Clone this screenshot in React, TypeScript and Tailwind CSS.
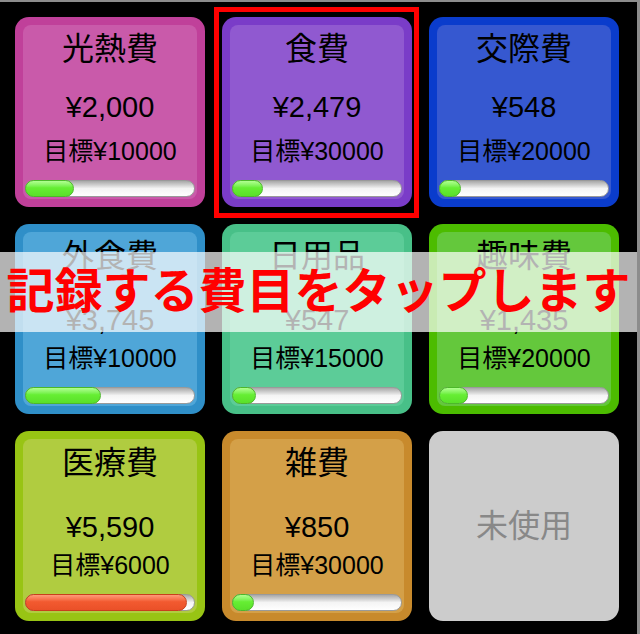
type Card = {
  name: string
  amount: number
  goal: number
  outer: string
  inner: string
  row: number
}

const CARDS: Card[] = [
  { name: '光熱費', amount: 2000, goal: 10000, outer: 'bg-[#c0409a]', inner: 'bg-[#c95aaa]', row: 1 },
  { name: '食費', amount: 2479, goal: 30000, outer: 'bg-[#7a3cc8]', inner: 'bg-[#9059d0]', row: 1 },
  { name: '交際費', amount: 548, goal: 20000, outer: 'bg-[#0a3ccc]', inner: 'bg-[#3658d0]', row: 1 },
  { name: '外食費', amount: 3745, goal: 10000, outer: 'bg-[#2f8fc8]', inner: 'bg-[#4fa6d8]', row: 2 },
  { name: '日用品', amount: 547, goal: 15000, outer: 'bg-[#48c088]', inner: 'bg-[#5ccc98]', row: 2 },
  { name: '趣味費', amount: 1435, goal: 20000, outer: 'bg-[#4cbc00]', inner: 'bg-[#64c83c]', row: 2 },
  { name: '医療費', amount: 5590, goal: 6000, outer: 'bg-[#98c414]', inner: 'bg-[#b0cc40]', row: 3 },
  { name: '雑費', amount: 850, goal: 30000, outer: 'bg-[#c88a2c]', inner: 'bg-[#d4a048]', row: 3 },
]

function ProgressBar({ ratio }: { ratio: number }) {
  const width = Math.min(170, 18 + 155 * ratio)
  const over = ratio > 0.8
  return (
    <div className="relative mx-[2px] mb-[2px] mt-[16px] h-[17px] w-[170px] rounded-full border border-[#9a9a9a] bg-linear-to-b from-[#a8a8a8] via-[#f4f4f4] via-50% to-white">
      <div
        className={
          over
            ? 'absolute -left-px -top-px h-[17px] rounded-full border border-[#c8401c] bg-linear-to-b from-[#ff9a78] via-[#f25a30] via-45% to-[#ea5028]'
            : 'absolute -left-px -top-px h-[17px] rounded-full border border-[#4cb82a] bg-linear-to-b from-[#b0ff90] via-[#66ee33] via-45% to-[#5ae02a]'
        }
        style={{ width }}
      />
    </div>
  )
}

function BudgetCard({ card }: { card: Card }) {
  return (
    <div className={`h-[190px] w-[190px] rounded-[14px] p-[8px] ${card.outer}`}>
      <div className={`flex h-full flex-col items-center rounded-[8px] ${card.inner}`}>
        <div className="mt-[8px] flex h-[32px] items-center text-[32px] leading-none">{card.name}</div>
        <div
          className={
            card.row === 1
              ? 'mt-[27px] flex h-[30px] items-center text-[29px] leading-none'
              : 'mt-[33px] flex h-[30px] items-center text-[29px] leading-none'
          }
        >
          ¥{card.amount.toLocaleString('en-US')}
        </div>
        <div className="mt-auto flex h-[26px] items-center text-[25px] leading-none">目標¥{card.goal}</div>
        <ProgressBar ratio={card.amount / card.goal} />
      </div>
    </div>
  )
}

export default function App() {
  return (
    <div className="relative h-[634px] w-[640px] overflow-hidden border-r-[3px] border-t-2 border-[#8c8c8c] bg-black font-['Liberation_Sans','Noto_Sans_CJK_JP',sans-serif] text-black">
      <div className="grid grid-cols-[190px_190px_190px] gap-[17px] pl-[15px] pt-[15px]">
        {CARDS.map((card, i) => (
          <div key={card.name} className="relative">
            <BudgetCard card={card} />
            {i === 1 && (
              <div className="absolute -bottom-[11px] -left-[8px] -right-[7px] -top-[10px] border-[5px] border-[#ff0000]" />
            )}
          </div>
        ))}
        <div className="flex h-[190px] w-[190px] items-center justify-center rounded-[14px] bg-[#cccccc] text-[32px] leading-none text-[#888888]">
          未使用
        </div>
      </div>
      <div className="absolute left-0 right-0 top-[250px] flex h-[80px] items-center justify-center bg-white/70">
        <span className="whitespace-nowrap text-[48px] font-bold leading-none text-[#ff0000]">
          記録する費目をタップします
        </span>
      </div>
    </div>
  )
}
